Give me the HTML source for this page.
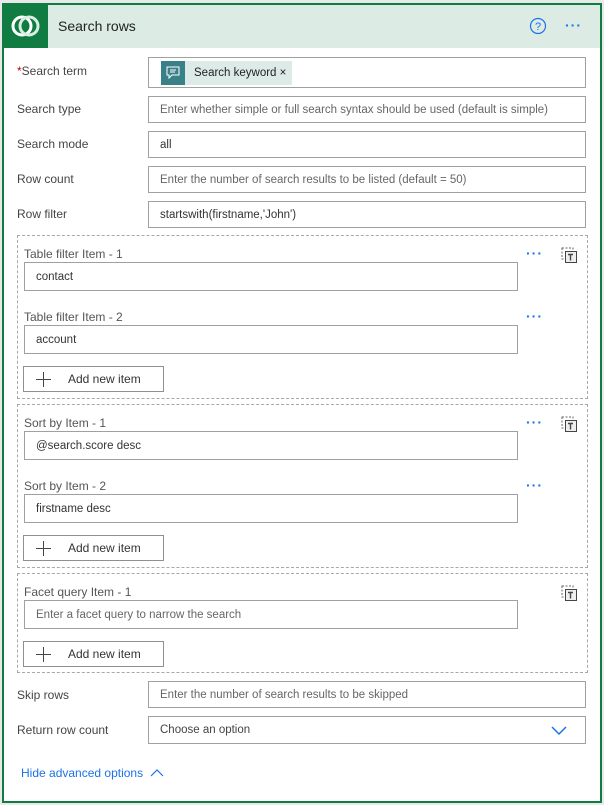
<!DOCTYPE html>
<html><head><meta charset="utf-8"><style>
*{box-sizing:border-box;margin:0;padding:0}
body{width:604px;height:805px;background:#e9e9e9;font-family:"Liberation Sans",sans-serif;font-size:12px;color:#333;position:relative;overflow:hidden}
.card{position:absolute;left:2px;top:3px;width:600px;height:800px;border:2px solid #107c41;background:#fff}
.hdr{position:absolute;left:0;top:0;width:596px;height:43px;background:#dcebe4}
.logo{position:absolute;left:0;top:0;width:44px;height:43px;background:#107c41}
.ttl{position:absolute;left:54px;top:13px;font-size:14px;color:#222}
.body{position:absolute;left:-2px;top:-2px;width:600px;height:800px}
.a{position:absolute}
.lbl{position:absolute;left:15px;color:#444;font-size:12px}
.inp{position:absolute;border:1px solid #a0a0a0;background:#fff;color:#666;padding-left:11px;display:flex;align-items:center;font-size:11.5px}
.inp.v{color:#333}
.sec{position:absolute;left:15px;width:571px;border:1px dashed #a8a8a8}
.il{position:absolute;left:6px;color:#555;font-size:12px}
.btn{position:absolute;left:5px;width:141px;height:26px;border:1px solid #909090;color:#333;display:flex;align-items:center;padding-left:44px;font-size:12px}
.btn:before{content:"";position:absolute;left:19px;top:5px;width:1px;height:15px;background:#444}
.btn:after{content:"";position:absolute;left:12px;top:12px;width:15px;height:1px;background:#444}
.dots{position:absolute;color:#1a73e8;font-size:14px;letter-spacing:1px;font-weight:bold}
.del{position:absolute;width:18px;height:18px}
</style></head><body>
<div class="card">
<div class="hdr">
<div class="logo"><svg width="44" height="43" viewBox="0 0 44 43"><circle cx="18" cy="21" r="9" fill="none" stroke="#fff" stroke-width="3"/><circle cx="25" cy="21" r="9" fill="none" stroke="#d9eee3" stroke-width="3"/></svg></div>
<div class="ttl">Search rows</div>
<svg class="a" style="left:525px;top:12px" width="18" height="18"><circle cx="9" cy="9" r="7.5" fill="none" stroke="#1a73e8" stroke-width="1.2"/><text x="9" y="13" font-size="11" text-anchor="middle" fill="#1a73e8" font-family="Liberation Sans">?</text></svg>
<div class="dots" style="left:561px;top:12px">···</div>
</div>
<div class="body">
<div class="lbl" style="top:61px"><span style="color:#c00">*</span>Search term</div>
<div class="inp" style="left:146px;top:54px;width:438px;height:31px;padding-left:12px"><div style="display:flex;height:24px;background:#dcebe8"><div style="width:24px;background:#3a8089;display:flex;align-items:center;justify-content:center"><svg width="14" height="13"><path d="M1 1h12v8H6l-3 3V9H1z" fill="none" stroke="#fff"/><path d="M4 4h6M4 6h5" stroke="#fff"/></svg></div><span style="padding:0 6px 0 9px;line-height:24px;color:#222">Search keyword ×</span></div></div>
<div class="lbl" style="top:99px">Search type</div>
<div class="inp" style="left:146px;top:93px;width:438px;height:27px">Enter whether simple or full search syntax should be used (default is simple)</div>
<div class="lbl" style="top:134px">Search mode</div>
<div class="inp v" style="left:146px;top:128px;width:438px;height:27px">all</div>
<div class="lbl" style="top:169px">Row count</div>
<div class="inp" style="left:146px;top:163px;width:438px;height:27px">Enter the number of search results to be listed (default = 50)</div>
<div class="lbl" style="top:204px">Row filter</div>
<div class="inp v" style="left:146px;top:198px;width:438px;height:27px">startswith(firstname,'John')</div>

<div class="sec" style="top:232px;height:164px">
<div class="il" style="top:11px">Table filter Item - 1</div>
<div class="inp v" style="left:6px;top:26px;width:494px;height:29px">contact</div>
<div class="dots" style="left:508px;top:9px">···</div>
<svg class="del" style="left:543px;top:11px"><rect x="1" y="1" width="11" height="11" fill="none" stroke="#666" stroke-dasharray="2 1.5"/><rect x="4.5" y="4.5" width="11" height="11" fill="#eee" stroke="#444"/><path d="M7 7.5h5M9.5 7.5v6" stroke="#444" stroke-width="1.4"/></svg>
<div class="il" style="top:74px">Table filter Item - 2</div>
<div class="inp v" style="left:6px;top:89px;width:494px;height:29px">account</div>
<div class="dots" style="left:508px;top:72px">···</div>
<div class="btn" style="top:130px">Add new item</div>
</div>

<div class="sec" style="top:401px;height:164px">
<div class="il" style="top:11px">Sort by Item - 1</div>
<div class="inp v" style="left:6px;top:26px;width:494px;height:29px">@search.score desc</div>
<div class="dots" style="left:508px;top:9px">···</div>
<svg class="del" style="left:543px;top:11px"><rect x="1" y="1" width="11" height="11" fill="none" stroke="#666" stroke-dasharray="2 1.5"/><rect x="4.5" y="4.5" width="11" height="11" fill="#eee" stroke="#444"/><path d="M7 7.5h5M9.5 7.5v6" stroke="#444" stroke-width="1.4"/></svg>
<div class="il" style="top:74px">Sort by Item - 2</div>
<div class="inp v" style="left:6px;top:89px;width:494px;height:29px">firstname desc</div>
<div class="dots" style="left:508px;top:72px">···</div>
<div class="btn" style="top:130px">Add new item</div>
</div>

<div class="sec" style="top:570px;height:100px">
<div class="il" style="top:11px">Facet query Item - 1</div>
<div class="inp" style="left:6px;top:26px;width:494px;height:29px">Enter a facet query to narrow the search</div>
<svg class="del" style="left:543px;top:11px"><rect x="1" y="1" width="11" height="11" fill="none" stroke="#666" stroke-dasharray="2 1.5"/><rect x="4.5" y="4.5" width="11" height="11" fill="#eee" stroke="#444"/><path d="M7 7.5h5M9.5 7.5v6" stroke="#444" stroke-width="1.4"/></svg>
<div class="btn" style="top:67px">Add new item</div>
</div>

<div class="lbl" style="top:685px">Skip rows</div>
<div class="inp" style="left:146px;top:678px;width:438px;height:27px">Enter the number of search results to be skipped</div>
<div class="lbl" style="top:720px">Return row count</div>
<div class="inp" style="left:146px;top:713px;width:438px;height:28px;color:#444">Choose an option<svg style="position:absolute;right:18px;top:9px" width="16" height="10"><path d="M1 1l7 7 7-7" fill="none" stroke="#1a73e8" stroke-width="1.5"/></svg></div>
<div class="a" style="left:19px;top:763px;color:#1a73e8;font-size:12px">Hide advanced options <svg width="14" height="9" style="margin-left:4px"><path d="M1 8l6-6 6 6" fill="none" stroke="#1a73e8" stroke-width="1.2"/></svg></div>
</div>
</div>
</body></html>
